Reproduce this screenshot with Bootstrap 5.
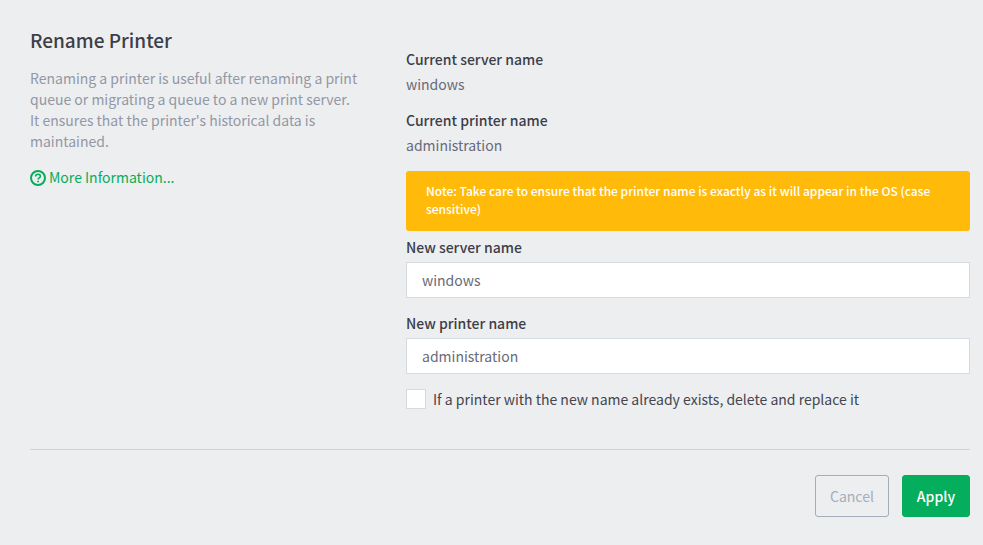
<!DOCTYPE html>
<html lang="en">
<head>
<meta charset="utf-8">
<meta name="viewport" content="width=device-width, initial-scale=1">
<title>Rename Printer</title>
<link href="https://cdn.jsdelivr.net/npm/bootstrap@5.3.0/dist/css/bootstrap.min.css" rel="stylesheet">
<style>
body { background: #edeef0; color: #43454f; font-family: "Source Sans Pro", "Noto Sans CJK SC", "Noto Sans", sans-serif; font-size: 14px; line-height: 21px; }
.page { padding: 30px 13px 28px 30px; }
.intro { width: 40%; padding-right: 48px; color: #9298a5; }
.fields { width: 60%; padding-top: 19px; }
.page-title { font-size: 19px; line-height: 20px; font-weight: 500; color: #3c3e48; margin-bottom: 18px; }
.summary { margin-bottom: 15px; }
.help { color: #05ad5b; gap: 3px; }
.help:hover { color: #04914c; }
.field-name { font-weight: 500; color: #3c3e48; }
.value { color: #676a79; margin: 4px 0 15px; }
.note { background: #ffba0a; color: #fff; font-size: 12px; line-height: 18px; font-weight: 500; padding: 11px 20px 13px; border-radius: 3px; margin-bottom: 6px; }
.form-control.entry { height: 36px; padding: 0 15px; border: 1px solid #d5dbe0; border-radius: 0; font-size: 14px; color: #676a79; margin: 4px 0 15px; }
.form-check-input.tick { width: 20px; height: 20px; margin: 0; border: 1px solid #d5dbe0; border-radius: 0; }
.tick-row { gap: 7px; }
.actions { border-top: 1px solid #cfd2d7; margin-top: 39px; padding-top: 25px; gap: 13px; }
.actions .btn { height: 42px; padding: 0 14px; border-radius: 3px; font-size: 14px; line-height: 21px; }
.btn-cancel, .btn-cancel:hover { border-color: #a5adbb; color: #a5adbb; }
.btn-apply, .btn-apply:hover { background: #05ae5c; border-color: #05ae5c; color: #fff; font-weight: 500; }
</style>
</head>
<body>
<main class="page">
  <form>
    <div class="d-flex">
      <section class="intro">
        <h1 class="page-title">Rename Printer</h1>
        <p class="summary">Renaming a printer is useful after renaming a print queue or migrating a queue to a new print server. It ensures that the printer's historical data is maintained.</p>
        <a class="help d-inline-flex align-items-center text-decoration-none" href="#">
          <svg width="16" height="16" viewBox="0 0 16 16" fill="none" stroke="currentColor" aria-hidden="true"><circle cx="8" cy="8" r="7" stroke-width="2"/><path d="M5.7 6.6V6.2C5.7 4.9 6.7 4.2 8 4.2s2.4.8 2.4 2c0 1.5-2.3 1.7-2.3 3.2" stroke-width="1.6"/><path d="M8.1 10.7v1.6" stroke-width="1.8"/></svg>
          <span>More Information...</span>
        </a>
      </section>
      <section class="fields">
        <div class="field-name">Current server name</div>
        <div class="value">windows</div>
        <div class="field-name">Current printer name</div>
        <div class="value">administration</div>
        <div class="note" role="note">Note: Take care to ensure that the printer name is exactly as it will appear in the OS (case sensitive)</div>
        <label class="field-name d-block" for="server">New server name</label>
        <input class="form-control entry" id="server" type="text" value="windows">
        <label class="field-name d-block" for="printer">New printer name</label>
        <input class="form-control entry" id="printer" type="text" value="administration">
        <div class="tick-row d-flex align-items-start">
          <input class="form-check-input tick flex-shrink-0" id="replace" type="checkbox">
          <label for="replace">If a printer with the new name already exists, delete and replace it</label>
        </div>
      </section>
    </div>
    <div class="actions d-flex justify-content-end">
      <button class="btn btn-cancel" type="button">Cancel</button>
      <button class="btn btn-apply" type="submit">Apply</button>
    </div>
  </form>
</main>
<script src="https://cdn.jsdelivr.net/npm/bootstrap@5.3.0/dist/js/bootstrap.bundle.min.js"></script>
</body>
</html>
